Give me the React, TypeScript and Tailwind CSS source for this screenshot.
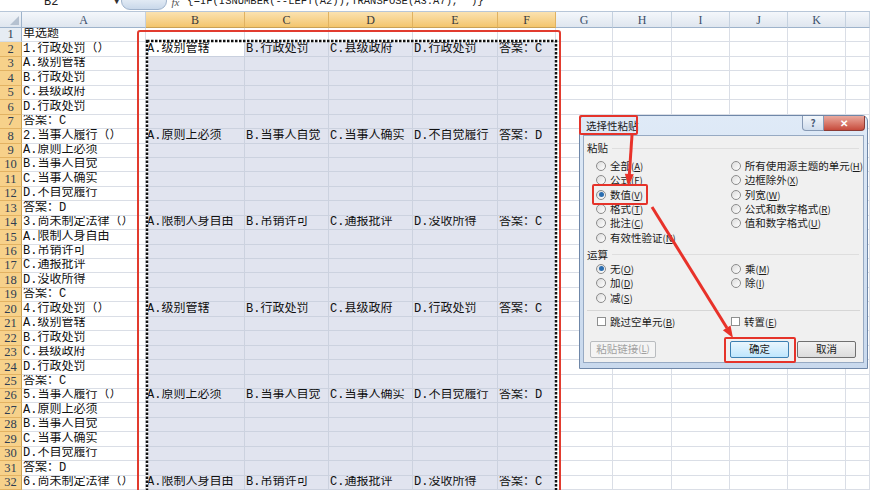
import React from 'react'

const COLS = ['A', 'B', 'C', 'D', 'E', 'F', 'G', 'H', 'I', 'J', 'K', '']

const Q1 = ['1.行政处罚（）', 'A.级别管辖', 'B.行政处罚', 'C.县级政府', 'D.行政处罚', '答案：C']
const Q2 = ['2.当事人履行（）', 'A.原则上必须', 'B.当事人自觉', 'C.当事人确实', 'D.不自觉履行', '答案：D']
const Q3 = ['3.尚未制定法律（）', 'A.限制人身自由', 'B.吊销许可', 'C.通报批评', 'D.没收所得', '答案：C']

const colA = [
    '单选题',
    ...Q1,
    ...Q2,
    ...Q3,
    '4.行政处罚（）', ...Q1.slice(1),
    '5.当事人履行（）', ...Q2.slice(1),
    '6.尚未制定法律（）',
]

// transposed answers sit on the question rows
const spread: Record<number, string[]> = {
    2: Q1.slice(1),
    8: Q2.slice(1),
    14: Q3.slice(1),
    20: Q1.slice(1),
    26: Q2.slice(1),
    32: Q3.slice(1),
}

const rows = Array.from({ length: 32 }, (_, i) => i + 1)

function Radio({ on }: { on?: boolean }) {
    return (
        <span className="flex h-[10px] w-[10px] shrink-0 items-center justify-center rounded-full border border-[#8c8c8c] bg-linear-to-br from-[#dcdcdc] to-white">
            {on && <span className="h-[5px] w-[5px] rounded-full bg-[#2a6db0]" />}
        </span>
    )
}

function Opt({ label, k, on }: { label: string; k: string; on?: boolean }) {
    return (
        <div className="flex h-[14.3px] items-center gap-[4px]">
            <Radio on={on} />
            <span className="whitespace-nowrap text-[10.5px] leading-[14px] text-[#1b1b1b]">
                {label}
                <span className="text-[9.5px]">(<u>{k}</u>)</span>
            </span>
        </div>
    )
}

function Box({ label, k }: { label: string; k: string }) {
    return (
        <div className="flex items-center gap-[4px]">
            <span className="h-[9px] w-[9px] shrink-0 border border-[#8e8f8f] bg-white" />
            <span className="whitespace-nowrap text-[10.5px] leading-[14px] text-[#1b1b1b]">
                {label}
                <span className="text-[9.5px]">(<u>{k}</u>)</span>
            </span>
        </div>
    )
}

function Dialog() {
    return (
        <div className="absolute left-[579px] top-[115px] h-[254px] w-[289px] rounded-t-[6px] border border-[#6f87a8] bg-linear-to-b from-[#dfeaf7] to-[#c9d9ed] font-['Noto_Sans_CJK_SC','Liberation_Sans',sans-serif]">
            <div className="flex h-[19px] items-start justify-between">
                <span className="pl-[6px] pt-[3px] text-[10.5px] leading-[14px] text-[#1b1b1b]">选择性粘贴</span>
                <div className="mr-[2px] flex">
                    <div className="flex h-[15px] w-[22px] items-center justify-center rounded-bl-[4px] border border-t-0 border-[#8699b4] bg-linear-to-b from-[#f3f7fb] to-[#cfdcec] text-[10px] font-bold leading-none text-[#4c5e78]">?</div>
                    <div className="flex h-[15px] w-[41px] items-center justify-center rounded-br-[4px] border border-t-0 border-l-0 border-[#8a3b35] bg-linear-to-b from-[#e9a99e] to-[#c64a3c] text-[10px] font-bold leading-none text-white">✕</div>
                </div>
            </div>
            <div className="mx-[3px] flex h-[228px] flex-col border border-[#97aac3] bg-[#f0f0f0]">
                <div className="mt-[6px] flex h-[12px] items-center pl-[3px]">
                    <span className="text-[10.5px] leading-[12px] text-[#1b1b1b]">粘贴</span>
                    <span className="ml-[4px] mr-[4px] h-px flex-1 bg-[#dedede]" />
                </div>
                <div className="mt-[5px] flex pl-[12px]">
                    <div className="flex w-[135px] flex-col">
                        <Opt label="全部" k="A" />
                        <Opt label="公式" k="F" />
                        <Opt label="数值" k="V" on />
                        <Opt label="格式" k="T" />
                        <Opt label="批注" k="C" />
                        <Opt label="有效性验证" k="N" />
                    </div>
                    <div className="flex flex-col">
                        <Opt label="所有使用源主题的单元" k="H" />
                        <Opt label="边框除外" k="X" />
                        <Opt label="列宽" k="W" />
                        <Opt label="公式和数字格式" k="R" />
                        <Opt label="值和数字格式" k="U" />
                    </div>
                </div>
                <div className="mt-[4px] flex h-[12px] items-center pl-[3px]">
                    <span className="text-[10.5px] leading-[12px] text-[#1b1b1b]">运算</span>
                    <span className="ml-[4px] mr-[4px] h-px flex-1 bg-[#dedede]" />
                </div>
                <div className="mt-[1px] flex pl-[12px]">
                    <div className="flex w-[135px] flex-col">
                        <Opt label="无" k="O" on />
                        <Opt label="加" k="D" />
                        <Opt label="减" k="S" />
                    </div>
                    <div className="flex flex-col">
                        <Opt label="乘" k="M" />
                        <Opt label="除" k="I" />
                    </div>
                </div>
                <div className="mx-[3px] mt-[5px] h-px bg-[#d6d6d6]" />
                <div className="mt-[4px] flex h-[14px] items-center pl-[13px]">
                    <div className="w-[134px]">
                        <Box label="跳过空单元" k="B" />
                    </div>
                    <Box label="转置" k="E" />
                </div>
                <div className="mt-[12px] flex h-[17px] pl-[6px]">
                    <div className="flex w-[66px] items-center justify-center rounded-[2px] border border-[#b9bcbf] bg-[#f4f4f4] text-[10.5px] leading-none text-[#a0a0a0]">
                        粘贴链接<span className="text-[9.5px]">(<u>L</u>)</span>
                    </div>
                    <div className="ml-[74px] flex w-[59px] items-center justify-center rounded-[2px] border border-[#3c7fb1] bg-linear-to-b from-[#eaf6fd] to-[#bee6fd] text-[10.5px] leading-none text-[#1b1b1b]">确定</div>
                    <div className="ml-[8px] flex w-[59px] items-center justify-center rounded-[2px] border border-[#707070] bg-linear-to-b from-[#f2f2f2] to-[#dcdcdc] text-[10.5px] leading-none text-[#1b1b1b]">取消</div>
                </div>
            </div>
        </div>
    )
}

export default function App() {
    return (
        <div className="relative h-[490px] w-[870px] overflow-hidden bg-white font-['Liberation_Mono','Noto_Sans_CJK_SC',monospace]">
            {/* formula bar, only its lower half is in view */}
            <div className="flex h-[12px] items-start overflow-hidden border-b border-[#b7c6d8] bg-white">
                <span className="ml-[44px] mt-[-6px] w-[70px] text-[12px] leading-[16px] text-[#222]">B2</span>
                <span className="mt-[-4px] text-[9px] leading-[12px] text-[#333]">▼</span>
                <span className="ml-[2px] mt-[-8px] h-[18px] w-[46px] rounded-full border border-[#9fb3cc] bg-linear-to-b from-[#f4f8fc] to-[#c9d8ea]" />
                <span className="ml-[4px] mt-[-6px] font-['Liberation_Serif',serif] text-[11px] italic leading-[16px] text-[#555]">fx</span>
                <span className="ml-[8px] mt-[-7px] text-[10.5px] leading-[16px] text-[#222]">{'{=IF(ISNUMBER(--LEFT(A2)),TRANSPOSE(A3:A7),"")}'}</span>
            </div>

            <div className="grid grid-cols-[22px_124px_99px_84px_84px_85px_58px_57px_59px_58px_58px_58px_24px] grid-rows-[16px_repeat(32,14.44px)]">
                <div className="relative border-b border-r border-[#9eb3cb] bg-linear-to-b from-[#f2f5f9] to-[#dfe6ef]">
                    <span className="absolute bottom-[2px] right-[2px] h-0 w-0 border-b-[9px] border-l-[9px] border-b-[#b5c1d0] border-l-transparent" />
                </div>
                {COLS.map((c, i) => (
                    <div
                        key={c + i}
                        className={
                            i >= 1 && i <= 5
                                ? "flex items-center justify-center border-b border-r border-b-[#c9a155] border-r-[#e0b261] bg-linear-to-b from-[#fbe2b0] to-[#f3c56c] font-['Liberation_Serif',serif] text-[12px] text-[#3a3a3a]"
                                : "flex items-center justify-center border-b border-r border-b-[#9eb3cb] border-r-[#c5d1df] bg-linear-to-b from-[#f4f7fb] to-[#dfe6ef] font-['Liberation_Serif',serif] text-[12px] text-[#3b4f6b]"
                        }
                    >
                        {c}
                    </div>
                ))}
                {rows.map((r) => (
                    <React.Fragment key={r}>
                        <div
                            className={
                                r >= 2
                                    ? "flex items-center justify-center border-b border-r border-b-[#e2b262] border-r-[#c9a155] bg-[#f7d18a] font-['Liberation_Serif',serif] text-[12.5px] leading-none text-[#2e3d52]"
                                    : "flex items-center justify-center border-b border-r border-b-[#d4dce7] border-r-[#9eb3cb] bg-[#e6ecf3] font-['Liberation_Serif',serif] text-[12.5px] leading-none text-[#2e3d52]"
                            }
                        >
                            {r}
                        </div>
                        {COLS.map((_, ci) => {
                            const sel = r >= 2 && ci >= 1 && ci <= 5
                            const active = r === 2 && ci === 1
                            const text = ci === 0 ? colA[r - 1] : sel && spread[r] ? spread[r][ci - 1] : ''
                            return (
                                <div
                                    key={ci}
                                    className={
                                        active
                                            ? 'flex items-end overflow-hidden whitespace-nowrap border-b border-r border-[#c9d0de] bg-white pl-[1px] text-[12px] leading-[14px] text-[#111]'
                                            : sel
                                              ? 'flex items-end overflow-hidden whitespace-nowrap border-b border-r border-[#ccd2df] bg-[#e1e4ef] pl-[1px] text-[12px] leading-[14px] text-[#111]'
                                              : 'flex items-end overflow-hidden whitespace-nowrap border-b border-r border-[#dadee6] bg-white pl-[1px] text-[12px] leading-[14px] text-[#111]'
                                    }
                                >
                                    {text}
                                </div>
                            )
                        })}
                    </React.Fragment>
                ))}
            </div>

            {/* copy marquee around B2:F… */}
            <svg className="pointer-events-none absolute left-0 top-0" width="870" height="490">
                <rect x="147" y="41" width="409" height="470" fill="none" stroke="#ffffff" strokeWidth="2.5" />
                <rect x="147" y="41" width="409" height="470" fill="none" stroke="#111111" strokeWidth="2.5" strokeDasharray="2.5 1.5" />
            </svg>

            {/* red highlight on the sheet */}
            <div className="pointer-events-none absolute left-[137px] top-[30px] h-[480px] w-[424px] rounded-[3px] border-[2.5px] border-[#e23b2e]" />

            <Dialog />

            {/* red marks over the dialog */}
            <div className="pointer-events-none absolute left-[579px] top-[115px] h-[20px] w-[59px] rounded-[2px] border-2 border-[#e5332a]" />
            <div className="pointer-events-none absolute left-[592px] top-[184px] h-[21px] w-[56px] rounded-[2px] border-2 border-[#e5332a]" />
            <div className="pointer-events-none absolute left-[724px] top-[337px] h-[26px] w-[72px] rounded-[2px] border-2 border-[#e5332a]" />

            <svg className="pointer-events-none absolute left-0 top-0" width="870" height="490">
                <line x1="632" y1="135" x2="629.3" y2="175" stroke="#e8322a" strokeWidth="3" />
                <polygon points="628.6,186 633.8,174.3 624.8,173.7" fill="#e8322a" />
                <line x1="652" y1="207" x2="727" y2="328" stroke="#e8322a" strokeWidth="3" />
                <polygon points="733,338 722.9,330.2 730.5,325.4" fill="#e8322a" />
            </svg>
        </div>
    )
}
